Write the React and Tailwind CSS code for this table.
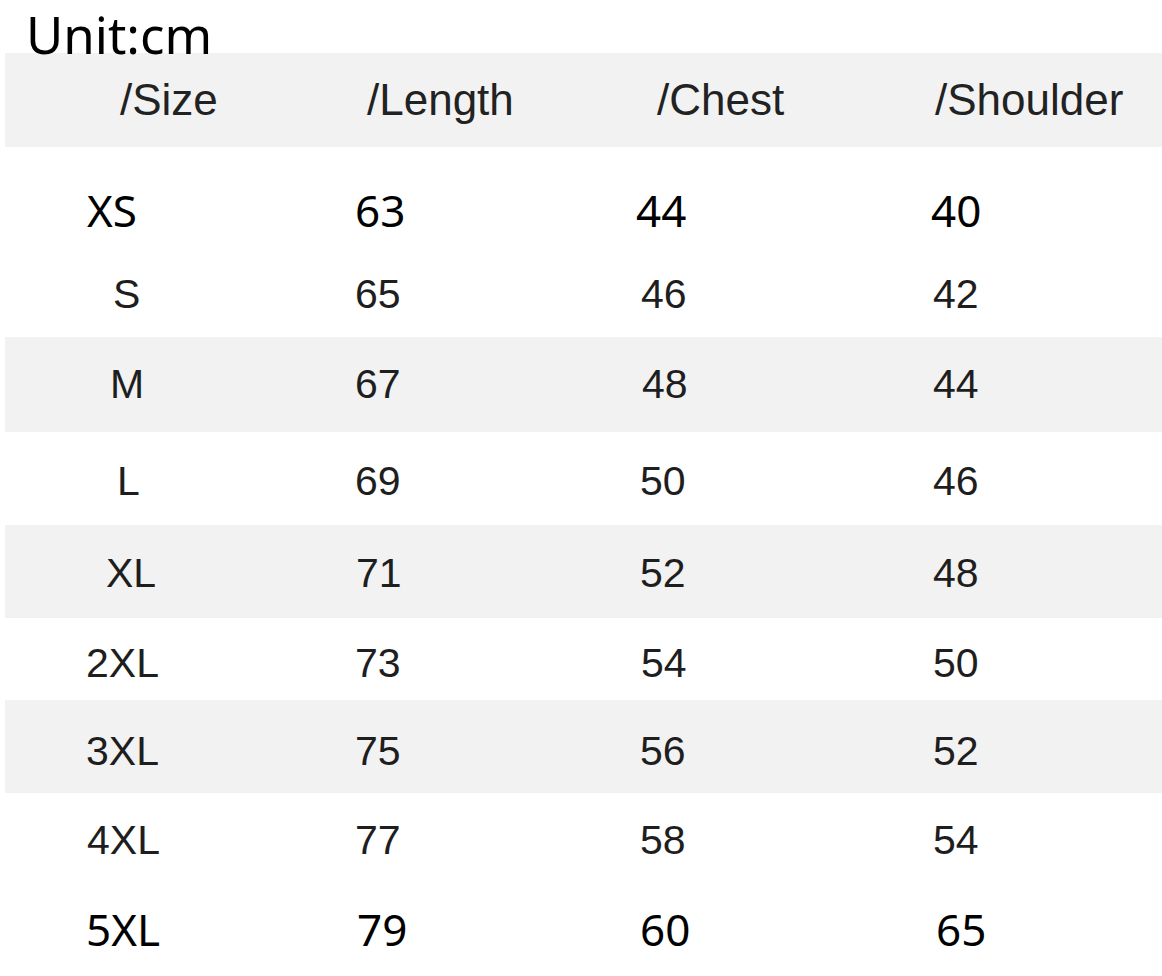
const arial = "font-['Liberation_Sans',Arial,sans-serif] text-[41px] text-[#1e1e1e]"
const noto = "font-['Noto_Sans','Open_Sans',sans-serif] text-[44px] text-black"

const rows = [
  { font: noto, h: 'h-[105px] pt-[20px]', bg: '', cells: [['XS', 'pl-[87px]'], ['63', 'pl-0'], ['44', 'pl-[1px]'], ['40', 'pl-[1px]']] },
  { font: arial, h: 'h-[85px]', bg: '', cells: [['S', 'pl-[113px]'], ['65', 'pl-0'], ['46', 'pl-[6px]'], ['42', 'pl-[3px]']] },
  { font: arial, h: 'h-[95px]', bg: 'bg-[#f2f2f2]', cells: [['M', 'pl-[110px]'], ['67', 'pl-0'], ['48', 'pl-[7px]'], ['44', 'pl-[3px]']] },
  { font: arial, h: 'h-[93px] pt-[5px]', bg: '', cells: [['L', 'pl-[117px]'], ['69', 'pl-0'], ['50', 'pl-[5px]'], ['46', 'pl-[3px]']] },
  { font: arial, h: 'h-[93px] pt-[3px]', bg: 'bg-[#f2f2f2]', cells: [['XL', 'pl-[106px]'], ['71', 'pl-[1px]'], ['52', 'pl-[5px]'], ['48', 'pl-[3px]']] },
  { font: arial, h: 'h-[82px] pt-[8px]', bg: '', cells: [['2XL', 'pl-[86px]'], ['73', 'pl-0'], ['54', 'pl-[6px]'], ['50', 'pl-[3px]']] },
  { font: arial, h: 'h-[93px] pt-[10px]', bg: 'bg-[#f2f2f2]', cells: [['3XL', 'pl-[86px]'], ['75', 'pl-0'], ['56', 'pl-[5px]'], ['52', 'pl-[3px]']] },
  { font: arial, h: 'h-[89px] pt-[5px]', bg: '', cells: [['4XL', 'pl-[87px]'], ['77', 'pl-0'], ['58', 'pl-[5px]'], ['54', 'pl-[3px]']] },
  { font: noto, h: 'h-[94px]', bg: '', cells: [['5XL', 'pl-[86px]'], ['79', 'pl-[2px]'], ['60', 'pl-[5px]'], ['65', 'pl-[6px]']] },
]

function Row({ font, h, bg, cells }) {
  return (
    <div className={`grid grid-cols-[350px_280px_295px_1fr] items-center ml-[5px] ${h} ${bg}`}>
      {cells.map(([text, pad], i) => (
        <div key={i} className={`leading-none whitespace-nowrap ${font} ${pad} ${i === 0 ? '-ml-[5px]' : ''}`}>
          {text}
        </div>
      ))}
    </div>
  )
}

export default function App() {
  return (
    <div className="w-[1162px] h-[976px] bg-white overflow-hidden">
      <div className="h-[53px] pl-[26px] pt-[9px] leading-none font-['Noto_Sans','Open_Sans',sans-serif] text-[51px] text-black">
        Unit:cm
      </div>
      <Row
        font="font-['Liberation_Sans',Arial,sans-serif] text-[44px] text-[#222]"
        h="h-[94px]"
        bg="bg-[#f2f2f2]"
        cells={[['/Size', 'pl-[120px]'], ['/Length', 'pl-[12px]'], ['/Chest', 'pl-[22px]'], ['/Shoulder', 'pl-[5px]']]}
      />
      {rows.map((r, i) => (
        <Row key={i} {...r} />
      ))}
    </div>
  )
}
